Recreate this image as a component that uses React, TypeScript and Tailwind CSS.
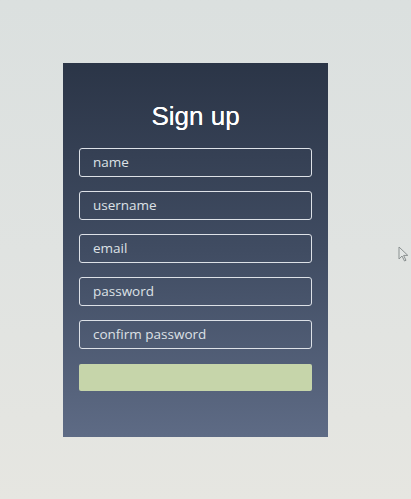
const fields = ["name", "username", "email", "password", "confirm password"];

export default function App() {
  return (
    <div className="relative h-[499px] w-full overflow-hidden bg-gradient-to-b from-[#dbe0df] via-[#e0e3e1] to-[#e6e6e1] pl-[63px] pt-[63px]">
      <div className="flex h-[374px] w-[265px] flex-col bg-gradient-to-b from-[#2b3547] via-[#404c62] to-[#5e6b85] px-[16px] pt-[37px]">
        <h1 className="text-center font-['Liberation_Sans',Arial,sans-serif] text-[26px] leading-[32px] text-white [text-shadow:0_0_0.5px_#fff]">
          Sign up
        </h1>
        <form className="mt-[16px] flex flex-col gap-[14px]">
          {fields.map((f) => (
            <input
              key={f}
              type={f.includes("password") ? "password" : "text"}
              placeholder={f}
              className="h-[29px] w-full rounded-[3px] border-[1.5px] border-[#dde1e7] bg-transparent pb-[2px] pl-[13px] font-['Open_Sans','Noto_Sans',sans-serif] text-[13.5px] text-white outline-none placeholder:text-[#dde1e6]"
            />
          ))}
          <button
            type="submit"
            className="mt-[1px] h-[27px] w-full rounded-[2px] bg-[#c6d5aa]"
          />
        </form>
      </div>
      <svg
        className="absolute left-[398px] top-[246px]"
        width="11"
        height="16"
        viewBox="0 0 11 16"
      >
        <path
          d="M1 1 L1 13 L4 10 L6.5 15 L8 14.3 L5.6 9.4 L9.8 9.4 Z"
          fill="#e3e6e5"
          stroke="#8b9191"
          strokeWidth="1"
          strokeLinejoin="round"
        />
      </svg>
    </div>
  );
}
